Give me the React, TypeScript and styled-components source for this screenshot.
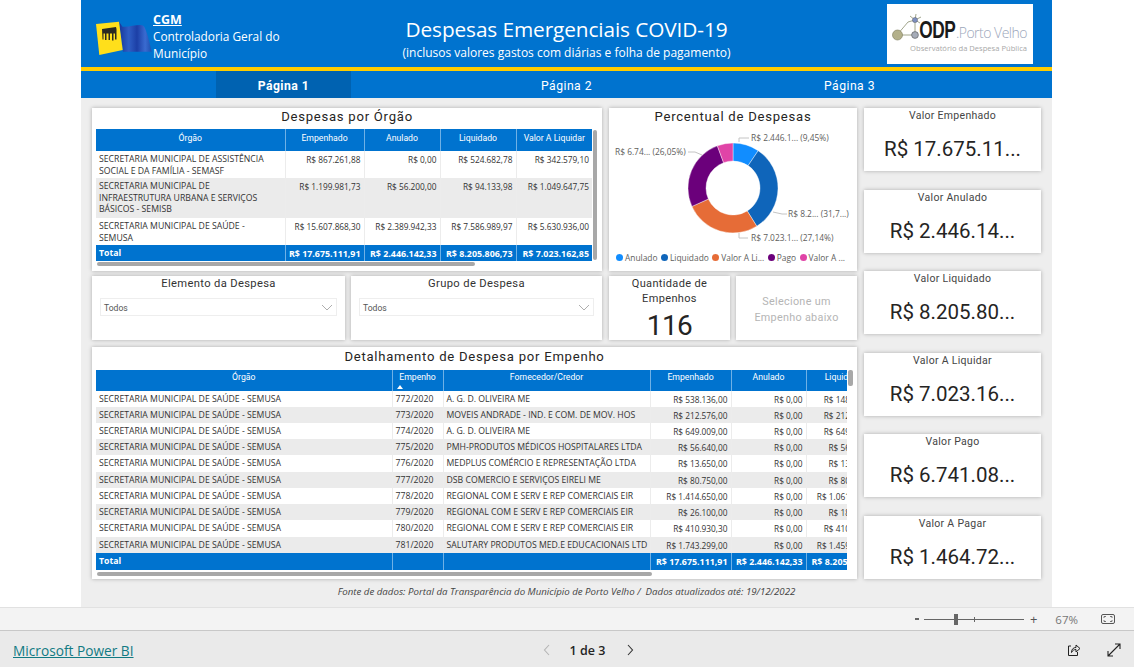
import React from "react";
import styled, { createGlobalStyle } from "styled-components";

const Global = createGlobalStyle`
  html, body { margin: 0; padding: 0; background: #fff; overflow: hidden; }
  * { box-sizing: border-box; }
`;

const SEGOE = `"Open Sans", "Noto Sans", sans-serif`;
const DIN = `"Roboto", "Liberation Sans", sans-serif`;

const Stage = styled.div`
  width: 1134px; height: 667px; display: flex; flex-direction: column; overflow: hidden; font-family: ${SEGOE};
`;
const Viewport = styled.div`
  height: 607px; padding-left: 81px; background: #fff; flex: none;
`;
const Report = styled.div`
  width: 971px; height: 607px; background: #eeeeee; display: flex; flex-direction: column;
`;
const Header = styled.header`
  height: 67px; background: #0073cf; color: #fff; display: grid; grid-template-columns: 1fr auto 1fr; align-items: center; flex: none;
`;
const Brand = styled.div`
  align-self: stretch; display: flex; align-items: flex-start; padding-left: 15px;
`;
const BrandText = styled.div`
  width: 135px; font-size: 11.85px; line-height: 17px; padding-top: 11px;
  b { display: block; font-size: 12.5px; text-decoration: underline; font-weight: 700; }
`;
const TitleBlock = styled.div`
  align-self: start; text-align: center; padding-top: 16px;
`;
const Title = styled.h1`
  margin: 0; font-weight: 400; font-size: 20.8px; line-height: 27px; white-space: nowrap; letter-spacing: -0.1px;
`;
const Subtitle = styled.div`
  font-size: 12px; line-height: 16px; white-space: nowrap; margin-top: 2px;
`;
const LogoBox = styled.div`
  justify-self: end; margin-right: 19px; width: 146px; height: 60px; background: #fff; position: relative;
  display: flex; flex-direction: column; align-items: flex-end; padding: 15px 6px 0 0; overflow: hidden;
`;
const LogoMark = styled.svg`
  position: absolute; left: 4px; top: 7px;
`;
const LogoName = styled.div`
  display: flex; align-items: baseline; line-height: 22px; height: 22px; color: #9ba6ba; font-size: 14px; font-family: ${SEGOE}; font-weight: 300; letter-spacing: -0.5px;
  b { font-family: "Liberation Sans", sans-serif; font-size: 24px; font-weight: 700; color: #1a1a1a; letter-spacing: -0.5px; transform: scaleX(.72); transform-origin: right; }
`;
const LogoTag = styled.div`
  font-size: 7.6px; color: #a8a8a8; line-height: 11px; margin-top: 2px; white-space: nowrap;
`;
const Stripe = styled.div`
  height: 4px; background: #ffcc00; flex: none;
`;
const Nav = styled.nav`
  height: 27px; background: #0073cf; display: grid; grid-template-columns: repeat(3, 283px); padding-left: 61px; flex: none;
`;
const Tab = styled.div<{ $active?: boolean }>`
  justify-self: center; width: 135px; height: 27px; line-height: 30px; text-align: center; color: #fff;
  font-family: ${DIN}; font-size: 12.2px; letter-spacing: .45px; font-weight: ${p => (p.$active ? 700 : 400)};
  background: ${p => (p.$active ? "#0062b1" : "transparent")};
`;
const Body = styled.main`
  display: grid; grid-template-columns: 765px 177px; column-gap: 7px; padding: 10px 0 0 11px; height: 481px; flex: none;
`;
const LeftCol = styled.div`
  display: flex; flex-direction: column;
`;
const RightCol = styled.div`
  display: flex; flex-direction: column; justify-content: space-between; height: 471px;
`;
const Card = styled.section`
  background: #fff; box-shadow: 0 0 4px rgba(0,0,0,.28); position: relative; min-width: 0;
`;
const TopRow = styled.div`
  display: grid; grid-template-columns: 510px 248px; column-gap: 7px; height: 163px;
`;
const FilterRow = styled.div`
  display: grid; grid-template-columns: 253px 251px 122px 121px; gap: 6px; height: 64px; margin-top: 5px;
  & > :nth-child(3) { margin-left: 1px; }
`;
const CardTitle = styled.h2`
  margin: 0; text-align: center; font-family: ${DIN}; font-weight: 400; font-size: 13.1px; letter-spacing: .75px; color: #252423; line-height: 18px; height: 21px;
`;
const DetailTitle = styled(CardTitle)`
  height: 23px; line-height: 20px;
`;
const TableWrap = styled.div<{ $w: number }>`
  margin-left: 4px; width: ${p => p.$w}px; overflow: hidden;
`;
const Grid = styled.table<{ $w: number }>`
  border-collapse: collapse; table-layout: fixed; width: ${p => p.$w}px; font-size: 8.7px; color: #333;
  th {
    background: #0073cf; color: #fff; font-family: ${DIN}; font-weight: 400; font-size: 8.7px; vertical-align: top; text-align: center;
    border-left: 1px solid #6fb1e6; padding: 4px 2px 0; white-space: nowrap; overflow: hidden; position: relative;
  }
  th:first-child, td:first-child { border-left: 0; }
  td { border-left: 1px solid #ececec; padding: 0 3px; vertical-align: top; overflow: hidden; line-height: 11.6px; }
  td:first-child { padding-right: 12px; }
  td.n { text-align: right; white-space: nowrap; font-size: 8.3px; }
  td.t { white-space: nowrap; }
  tfoot td { background: #0073cf; color: #fff; font-weight: 700; border-left: 1px solid #6fb1e6; vertical-align: middle; white-space: nowrap; padding-top: 1px; }
  tfoot td.n { font-size: 8.9px; padding-left: 0; }
`;
const DetailGrid = styled(Grid)`
  th { padding-top: 2px; }
`;
const Row = styled.tr<{ $h: number; $odd: boolean }>`
  height: ${p => p.$h}px;
  td { background: ${p => (p.$odd ? "#ebebeb" : "#fff")}; padding-top: 3px; }
`;
const HeadRow = styled.tr<{ $h: number }>`
  height: ${p => p.$h}px;
`;
const FootRow = styled.tr<{ $h: number }>`
  height: ${p => p.$h}px;
`;
const SortMark = styled.span`
  position: absolute; left: 4px; bottom: 2px; width: 0; height: 0; border-left: 3px solid transparent; border-right: 3px solid transparent; border-bottom: 4px solid #fff;
`;
const Scroll = styled.div<{ $x: number; $y: number; $w: number; $h: number }>`
  position: absolute; left: ${p => p.$x}px; top: ${p => p.$y}px; width: ${p => p.$w}px; height: ${p => p.$h}px; background: #a8a8a8; border-radius: 2px;
`;
const DonutWrap = styled.div`
  height: 119px; overflow: hidden;
`;
const Legend = styled.div`
  display: flex; align-items: center; padding-left: 7px; font-size: 8.4px; color: #605e5c; white-space: nowrap; height: 18px;
`;
const LegendItem = styled.span<{ $c: string }>`
  display: inline-flex; align-items: center; margin-right: 3.5px;
  &::before { content: ""; width: 7px; height: 7px; border-radius: 50%; background: ${p => p.$c}; margin-right: 2px; }
`;
const SlicerTitle = styled.div`
  text-align: center; font-family: ${DIN}; font-size: 11.2px; letter-spacing: .35px; color: #333; line-height: 15px;
`;
const Dropdown = styled.div`
  margin: 7px 8px 0; height: 18px; border: 1px solid #eeeeee; display: flex; align-items: center; justify-content: space-between;
  padding: 1px 3px 0; font-family: ${DIN}; font-size: 8.6px; color: #555;
`;
const QtyLabel = styled.div`
  text-align: center; font-family: ${DIN}; font-size: 11px; letter-spacing: .35px; line-height: 15px; color: #333;
`;
const QtyValue = styled.div`
  text-align: center; font-family: ${DIN}; font-size: 28px; letter-spacing: -0.5px; line-height: 28px; color: #252423; margin-top: 6px;
`;
const Hint = styled.div`
  text-align: center; font-family: ${DIN}; font-size: 10.8px; letter-spacing: .3px; line-height: 16px; color: #b5b5b5; padding-top: 18px;
`;
const DetailCard = styled(Card)`
  height: 232px; margin-top: 7px;
`;
const Kpi = styled(Card)`
  height: 63px; text-align: center;
`;
const KpiLabel = styled.div`
  font-family: ${DIN}; font-size: 10.5px; letter-spacing: .3px; color: #444; line-height: 14px; padding-top: 1px;
`;
const KpiValue = styled.div`
  font-family: ${DIN}; font-size: 20.5px; color: #252423; line-height: 26px; margin-top: 13px; white-space: nowrap;
`;
const Source = styled.div`
  text-align: center; font-size: 9.7px; font-style: italic; color: #444; height: 26px; line-height: 26px; flex: none;
`;
const ZoomBar = styled.div`
  height: 23px; background: #f3f3f3; border-top: 1px solid #e1e1e1; display: flex; align-items: center; justify-content: flex-end; padding-right: 19px; flex: none; color: #666;
`;
const ZoomMinus = styled.span`
  width: 4px; height: 2px; background: #666; margin-right: 5px;
`;
const Slider = styled.div`
  width: 100px; height: 1px; background: #666; position: relative;
`;
const Thumb = styled.span`
  position: absolute; left: 30px; top: -5px; width: 4px; height: 11px; background: #666;
`;
const Tick = styled.span`
  position: absolute; left: 50px; top: -2px; width: 1px; height: 5px; background: #666;
`;
const ZoomPlus = styled.span`
  font-family: ${SEGOE}; font-size: 13px; line-height: 1; margin: 0 0 0 6px; color: #555;
`;
const ZoomPct = styled.span`
  font-size: 11.5px; margin: 0 23px 0 18px; color: #777;
`;
const Footer = styled.footer`
  height: 37px; background: #eaeaea; border-top: 1px solid #c8c8c8; display: grid; grid-template-columns: 1fr auto 1fr; align-items: center; padding: 2px 13px 0; flex: none;
`;
const PbiLink = styled.a`
  font-size: 13.7px; color: #117a83; text-decoration: underline; justify-self: start; font-family: ${SEGOE};
`;
const Pager = styled.div`
  display: flex; align-items: center; gap: 18px; font-size: 12.5px; font-weight: 600; color: #252423; margin-left: 43px;
  svg:last-child { margin-left: 2px; }
`;
const Tools = styled.div`
  justify-self: end; display: flex; gap: 26px; align-items: center;
`;

const s = "SECRETARIA MUNICIPAL DE SAÚDE - SEMUSA";
const first = [
  { o: "SECRETARIA MUNICIPAL DE ASSISTÊNCIA SOCIAL E DA FAMÍLIA - SEMASF", v: ["R$ 867.261,88", "R$ 0,00", "R$ 524.682,78", "R$ 342.579,10"], h: 27 },
  { o: "SECRETARIA MUNICIPAL DE INFRAESTRUTURA URBANA E SERVIÇOS BÁSICOS - SEMISB", v: ["R$ 1.199.981,73", "R$ 56.200,00", "R$ 94.133,98", "R$ 1.049.647,75"], h: 40 },
  { o: "SECRETARIA MUNICIPAL DE SAÚDE - SEMUSA", v: ["R$ 15.607.868,30", "R$ 2.389.942,33", "R$ 7.586.989,97", "R$ 5.630.936,00"], h: 27 },
];
const detail = [
  ["772/2020", "A. G. D. OLIVEIRA ME", "R$ 538.136,00", "R$ 148.136,00"],
  ["773/2020", "MOVEIS ANDRADE - IND. E COM. DE MOV. HOS", "R$ 212.576,00", "R$ 212.576,00"],
  ["774/2020", "A. G. D. OLIVEIRA ME", "R$ 649.009,00", "R$ 649.009,00"],
  ["775/2020", "PMH-PRODUTOS MÉDICOS HOSPITALARES LTDA", "R$ 56.640,00", "R$ 56.640,00"],
  ["776/2020", "MEDPLUS COMÉRCIO E REPRESENTAÇÃO LTDA", "R$ 13.650,00", "R$ 13.650,00"],
  ["777/2020", "DSB COMERCIO E SERVIÇOS EIRELI ME", "R$ 80.750,00", "R$ 80.750,00"],
  ["778/2020", "REGIONAL COM E SERV E REP COMERCIAIS EIR", "R$ 1.414.650,00", "R$ 1.061.000,00"],
  ["779/2020", "REGIONAL COM E SERV E REP COMERCIAIS EIR", "R$ 26.100,00", "R$ 18.100,00"],
  ["780/2020", "REGIONAL COM E SERV E REP COMERCIAIS EIR", "R$ 410.930,30", "R$ 410.930,30"],
  ["781/2020", "SALUTARY PRODUTOS MED.E EDUCACIONAIS LTD", "R$ 1.743.299,00", "R$ 1.459.000,00"],
];
const kpis = [
  ["Valor Empenhado", "R$ 17.675.11..."],
  ["Valor Anulado", "R$ 2.446.14..."],
  ["Valor Liquidado", "R$ 8.205.80..."],
  ["Valor A Liquidar", "R$ 7.023.16..."],
  ["Valor Pago", "R$ 6.741.08..."],
  ["Valor A Pagar", "R$ 1.464.72..."],
];
const slices = [
  { p: 9.45, c: "#118dff" },
  { p: 31.7, c: "#0f65ba" },
  { p: 27.14, c: "#e66c37" },
  { p: 26.05, c: "#6b007b" },
  { p: 5.66, c: "#e044a7" },
];

function arc(cx: number, cy: number, r0: number, r1: number, a: number, b: number) {
  const pt = (r: number, t: number) => {
    const x = cx + r * Math.sin(t * Math.PI * 2);
    const y = cy - r * Math.cos(t * Math.PI * 2);
    return `${x.toFixed(2)} ${y.toFixed(2)}`;
  };
  const large = b - a > 0.5 ? 1 : 0;
  return `M${pt(r1, a)}A${r1} ${r1} 0 ${large} 1 ${pt(r1, b)}L${pt(r0, b)}A${r0} ${r0} 0 ${large} 0 ${pt(r0, a)}Z`;
}

function Donut() {
  let acc = 0;
  const cx = 124, cy = 59;
  return (
    <svg width="248" height="119" viewBox="0 0 248 119" style={{ display: "block" }}>
      {slices.map(sl => {
        const a = acc / 100;
        acc += sl.p;
        return <path key={sl.c} d={arc(cx, cy, 27, 45, a, acc / 100)} fill={sl.c} stroke="#fff" strokeWidth=".4" />;
      })}
      <g fill="none" stroke="#c4c4c4" strokeWidth="1">
        <path d="M130 13V9H140" />
        <path d="M164 83L173 85H178" />
        <path d="M130 104V109H139" />
        <path d="M79 23H86L93 26" />
      </g>
      <g fontFamily={SEGOE} fontSize="8.4" fill="#605e5c">
        <text x="142" y="12">R$ 2.446.1... (9,45%)</text>
        <text x="179" y="88">R$ 8.2... (31,7...)</text>
        <text x="142" y="112">R$ 7.023.1... (27,14%)</text>
        <text x="6" y="26">R$ 6.74... (26,05%)</text>
      </g>
    </svg>
  );
}

function Flag() {
  return (
    <svg width="57" height="35" viewBox="0 0 57 35" style={{ flex: "none", marginTop: 21 }}>
      <defs>
        <linearGradient id="fl" x1="0" x2="1" y1="0" y2="0">
          <stop offset="0" stopColor="#16379a" />
          <stop offset=".3" stopColor="#2f5ec4" />
          <stop offset=".55" stopColor="#1c3fa6" />
          <stop offset=".8" stopColor="#3a6bd0" />
          <stop offset="1" stopColor="#1c4fb0" />
        </linearGradient>
      </defs>
      <path d="M23 .7C25 3 26 5.7 27 5.7C33 6 39 4 44 4C47 4 48 5 49 7.3C52 14 54 24 55.7 30.7L27 30.7Z" fill="url(#fl)" />
      <path d="M0 3L23 .7L26.7 29L3.3 34Z" fill="#ffdf1b" />
      <path d="M6 8L20 6L20.5 8V18.5H19V12.5H17.5V19.5H16V12.5H14V19H12.5V12.5H10.5V19H9V12.5H7.5V18.5H6.5Z" fill="#2a2a22" />
    </svg>
  );
}

function OdpMark() {
  return (
    <LogoMark width="34" height="32" viewBox="0 0 34 32">
      <g stroke="#8a8f70" strokeWidth=".8" fill="none">
        <path d="M6 24L17 11L24 9M6 24L24 24M24 9V24M24 9L19 5M24 9L30 6M24 9L29 12M24 9L25 3" />
      </g>
      <circle cx="6.5" cy="24" r="5" fill="#b3b08a" stroke="#7c7a5a" strokeWidth=".6" />
      <circle cx="24" cy="24" r="3.4" fill="#a6acb8" stroke="#555" strokeWidth=".6" />
      <circle cx="24" cy="9" r="2.6" fill="#7d8fc0" stroke="#555" strokeWidth=".4" />
    </LogoMark>
  );
}

const Chev = ({ d, c }: { d: string; c: string }) => (
  <svg width="10" height="14" viewBox="0 0 10 14"><path d={d} fill="none" stroke={c} strokeWidth="1.1" /></svg>
);

function Chev2() {
  return <svg width="12" height="7" viewBox="0 0 12 7" fill="none" stroke="#999" strokeWidth=".8"><path d="M1 1L6 6L11 1" /></svg>;
}

export default function App() {
  return (
    <Stage>
      <Global />
      <Viewport>
        <Report>
          <Header>
            <Brand>
              <Flag />
              <BrandText>
                <b>CGM</b>
                Controladoria Geral do Município
              </BrandText>
            </Brand>
            <TitleBlock>
              <Title>Despesas Emergenciais COVID-19</Title>
              <Subtitle>(inclusos valores gastos com diárias e folha de pagamento)</Subtitle>
            </TitleBlock>
            <LogoBox>
              <OdpMark />
              <LogoName><b>ODP</b>.Porto Velho</LogoName>
              <LogoTag>Observatório da Despesa Pública</LogoTag>
            </LogoBox>
          </Header>
          <Stripe />
          <Nav>
            <Tab $active>Página 1</Tab>
            <Tab>Página 2</Tab>
            <Tab>Página 3</Tab>
          </Nav>
          <Body>
            <LeftCol>
              <TopRow>
                <Card>
                  <CardTitle>Despesas por Órgão</CardTitle>
                  <TableWrap $w={496}>
                    <Grid $w={496}>
                      <colgroup>
                        <col width="189" /><col width="79" /><col width="76" /><col width="76" /><col width="76" />
                      </colgroup>
                      <thead>
                        <HeadRow $h={22}>
                          <th>Órgão</th><th>Empenhado</th><th>Anulado</th><th>Liquidado</th><th>Valor A Liquidar</th>
                        </HeadRow>
                      </thead>
                      <tbody>
                        {first.map((r, i) => (
                          <Row key={i} $h={r.h} $odd={i % 2 === 1}>
                            <td>{r.o}</td>
                            {r.v.map((v, j) => <td className="n" key={j}>{v}</td>)}
                          </Row>
                        ))}
                      </tbody>
                      <tfoot>
                        <FootRow $h={16}>
                          <td>Total</td>
                          <td className="n">R$ 17.675.111,91</td>
                          <td className="n">R$ 2.446.142,33</td>
                          <td className="n">R$ 8.205.806,73</td>
                          <td className="n">R$ 7.023.162,85</td>
                        </FootRow>
                      </tfoot>
                    </Grid>
                  </TableWrap>
                  <Scroll $x={501} $y={22} $w={4} $h={130} />
                  <Scroll $x={5} $y={154} $w={378} $h={4} />
                </Card>
                <Card>
                  <CardTitle>Percentual de Despesas</CardTitle>
                  <DonutWrap><Donut /></DonutWrap>
                  <Legend>
                    {[["Anulado", 0], ["Liquidado", 1], ["Valor A Li...", 2], ["Pago", 3], ["Valor A ...", 4]].map(([t, i]) => (
                      <LegendItem key={t as string} $c={slices[i as number].c}>{t}</LegendItem>
                    ))}
                  </Legend>
                </Card>
              </TopRow>
              <FilterRow>
                <Card>
                  <SlicerTitle>Elemento da Despesa</SlicerTitle>
                  <Dropdown>Todos<Chev2 /></Dropdown>
                </Card>
                <Card>
                  <SlicerTitle>Grupo de Despesa</SlicerTitle>
                  <Dropdown>Todos<Chev2 /></Dropdown>
                </Card>
                <Card>
                  <QtyLabel>Quantidade de<br />Empenhos</QtyLabel>
                  <QtyValue>116</QtyValue>
                </Card>
                <Card>
                  <Hint>Selecione um<br />Empenho abaixo</Hint>
                </Card>
              </FilterRow>
              <DetailCard>
                <DetailTitle>Detalhamento de Despesa por Empenho</DetailTitle>
                <TableWrap $w={751}>
                  <DetailGrid $w={785}>
                    <colgroup>
                      <col width="296" /><col width="51" /><col width="207" /><col width="81" /><col width="75" /><col width="75" />
                    </colgroup>
                    <thead>
                      <HeadRow $h={21}>
                        <th>Órgão</th>
                        <th>Empenho<SortMark /></th>
                        <th>Fornecedor/Credor</th><th>Empenhado</th><th>Anulado</th><th>Liquidado</th>
                      </HeadRow>
                    </thead>
                    <tbody>
                      {detail.map((r, i) => (
                        <Row key={i} $h={i === 4 || i === 8 ? 17 : 16} $odd={i % 2 === 1}>
                          <td className="t">{s}</td>
                          <td className="t">{r[0]}</td>
                          <td className="t">{r[1]}</td>
                          <td className="n">{r[2]}</td>
                          <td className="n">R$ 0,00</td>
                          <td className="n">{r[3]}</td>
                        </Row>
                      ))}
                    </tbody>
                    <tfoot>
                      <FootRow $h={17}>
                        <td>Total</td><td></td><td></td>
                        <td className="n">R$ 17.675.111,91</td>
                        <td className="n">R$ 2.446.142,33</td>
                        <td className="n">R$ 8.205.806,73</td>
                      </FootRow>
                    </tfoot>
                  </DetailGrid>
                </TableWrap>
                <Scroll $x={756} $y={23} $w={5} $h={16} />
                <Scroll $x={5} $y={225} $w={555} $h={4} />
              </DetailCard>
            </LeftCol>
            <RightCol>
              {kpis.map(([l, v]) => (
                <Kpi key={l}>
                  <KpiLabel>{l}</KpiLabel>
                  <KpiValue>{v}</KpiValue>
                </Kpi>
              ))}
            </RightCol>
          </Body>
          <Source>Fonte de dados: Portal da Transparência do Município de Porto Velho /&nbsp; Dados atualizados até: 19/12/2022</Source>
        </Report>
      </Viewport>
      <ZoomBar>
        <ZoomMinus />
        <Slider><Thumb /><Tick /></Slider>
        <ZoomPlus>+</ZoomPlus>
        <ZoomPct>67%</ZoomPct>
        <svg width="14" height="10" viewBox="0 0 14 10" fill="none" stroke="#555"><rect x=".5" y=".5" width="13" height="9" rx="1.5" /><path d="M3 4V2.5H5M9 2.5H11V4M11 6V7.5H9M5 7.5H3V6" strokeWidth=".8" /></svg>
      </ZoomBar>
      <Footer>
        <PbiLink>Microsoft Power BI</PbiLink>
        <Pager>
          <Chev d="M7 2L2.5 7L7 12" c="#b5b5b5" />
          <span>1 de 3</span>
          <Chev d="M3 2L7.5 7L3 12" c="#333" />
        </Pager>
        <Tools>
          <svg width="14" height="14" viewBox="0 0 14 14" fill="none" stroke="#222" strokeWidth="1"><path d="M4 3H1.5V12.5H10.5V9" /><path d="M4.5 9.5C4.5 6 6.5 4.5 9 4.5V2L13 5.5L9 9V6.5C7 6.5 5.5 7.5 4.5 9.5Z" /></svg>
          <svg width="14" height="14" viewBox="0 0 14 14" fill="none" stroke="#222" strokeWidth="1.1"><path d="M1 13L13 1M8 1H13V6M1 8V13H6" /></svg>
        </Tools>
      </Footer>
    </Stage>
  );
}
